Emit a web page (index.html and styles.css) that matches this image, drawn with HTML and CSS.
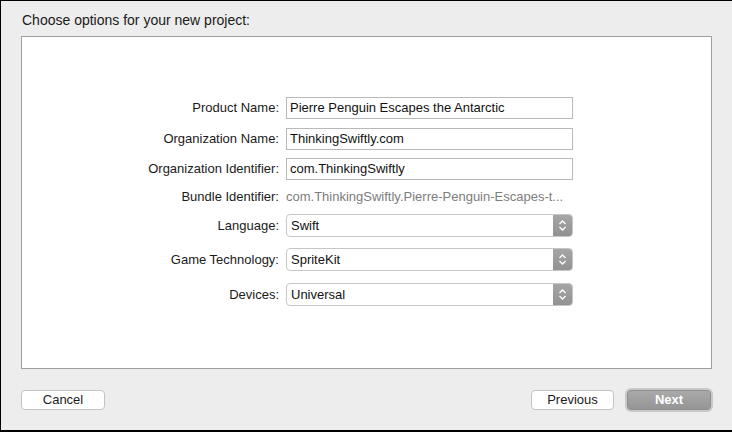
FILE: index.html
```html
<!DOCTYPE html>
<html>
<head>
<meta charset="utf-8">
<link rel="stylesheet" href="styles.css">
</head>
<body>
<div class="window">
  <div class="title">Choose options for your new project:</div>
  <div class="panel">
    <div class="form">
      <div class="row r1"><div class="label">Product Name:</div><div class="field">Pierre Penguin Escapes the Antarctic</div></div>
      <div class="row r2"><div class="label">Organization Name:</div><div class="field">ThinkingSwiftly.com</div></div>
      <div class="row r3"><div class="label">Organization Identifier:</div><div class="field">com.ThinkingSwiftly</div></div>
      <div class="row r4"><div class="label">Bundle Identifier:</div><div class="static">com.ThinkingSwiftly.Pierre-Penguin-Escapes-t...</div></div>
      <div class="row r5"><div class="label">Language:</div><div class="popup"><span class="ptext">Swift</span><span class="stepper"><svg width="9" height="13" viewBox="0 0 9 13"><path d="M1.5 5 L4.5 2 L7.5 5 M1.5 8 L4.5 11 L7.5 8" fill="none" stroke="#fff" stroke-width="1.3"/></svg></span></div></div>
      <div class="row r6"><div class="label">Game Technology:</div><div class="popup"><span class="ptext">SpriteKit</span><span class="stepper"><svg width="9" height="13" viewBox="0 0 9 13"><path d="M1.5 5 L4.5 2 L7.5 5 M1.5 8 L4.5 11 L7.5 8" fill="none" stroke="#fff" stroke-width="1.3"/></svg></span></div></div>
      <div class="row r7"><div class="label">Devices:</div><div class="popup"><span class="ptext">Universal</span><span class="stepper"><svg width="9" height="13" viewBox="0 0 9 13"><path d="M1.5 5 L4.5 2 L7.5 5 M1.5 8 L4.5 11 L7.5 8" fill="none" stroke="#fff" stroke-width="1.3"/></svg></span></div></div>
    </div>
  </div>
  <div class="footer">
    <div class="btn cancel">Cancel</div>
    <div class="spacer"></div>
    <div class="btn prev">Previous</div>
    <div class="ring"><div class="btn next">Next</div></div>
  </div>
</div>
</body>
</html>
```
FILE: styles.css
```css
html, body { margin: 0; padding: 0; }
body { font-family: "Liberation Sans", Arial, sans-serif; font-size: 13px; color: #1a1a1a; }
.window {
  width: 732px; height: 432px; box-sizing: border-box;
  border-top: 1px solid #000; border-left: 1px solid #000; border-bottom: 2px solid #000;
  background: #ededed; display: flex; flex-direction: column;
}
.title { padding: 11px 0 0 21px; height: 24px; line-height: 17px; font-size: 14px; }
.panel {
  margin-left: 20px; width: 691px; height: 333px; box-sizing: border-box;
  border: 1px solid #9f9f9f; background: #fff; padding-top: 60px;
}
.row { display: flex; align-items: center; }
.label { width: 257px; text-align: right; margin-right: 7px; line-height: 16px; }
.field {
  width: 287px; height: 22px; box-sizing: border-box; border: 1px solid #b9b9b9;
  padding-left: 3px; line-height: 20px; background: #fff; color: #111;
}
.static { color: #7d7d7d; line-height: 18px; }
.r1 { height: 22px; }
.r2 { height: 22px; margin-top: 9px; }
.r3 { height: 22px; margin-top: 8px; }
.r4 { height: 18px; margin-top: 8px; }
.r5 { height: 23px; margin-top: 8px; }
.r6 { height: 23px; margin-top: 11px; }
.r7 { height: 23px; margin-top: 12px; }
.popup {
  width: 287px; height: 23px; box-sizing: border-box; border: 1px solid #c6c6c6;
  border-radius: 4px; display: flex; align-items: stretch; overflow: hidden; background: #fff;
}
.ptext { flex: 1; padding-left: 4px; line-height: 21px; color: #111; }
.stepper {
  width: 19px; background: linear-gradient(#a6a6a6, #929292);
  display: flex; align-items: center; justify-content: center;
}
.footer { display: flex; align-items: center; padding: 19px 19px 0 20px; }
.spacer { flex: 1; }
.btn {
  height: 20px; box-sizing: border-box; border: 1px solid #c3c3c3; border-radius: 4px;
  background: #fff; text-align: center; line-height: 18px; color: #1a1a1a;
}
.cancel { width: 84px; }
.prev { width: 83px; margin-right: 11px; }
.ring { padding: 2px; border-radius: 6px; background: #c9c9c9; }
.next {
  width: 84px; border-color: #8e8e8e; background: linear-gradient(#aaaaaa, #959595);
  color: #fff; font-weight: bold;
}
```
